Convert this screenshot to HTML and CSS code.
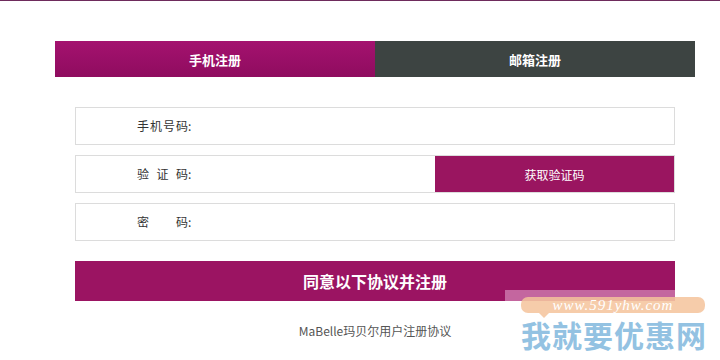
FILE: index.html
```html
<!DOCTYPE html>
<html lang="zh-CN">
<head>
    <meta charset="UTF-8">
    <meta name="viewport" content="width=device-width, initial-scale=1.0">
    <title>注册</title>
    <link rel="stylesheet" href="styles.css">
</head>
<body>
    <div class="top-line"></div>

    <div class="register">
        <div class="tabs">
            <div class="tab active">手机注册</div>
            <div class="tab">邮箱注册</div>
        </div>

        <form class="reg-form">
            <div class="field">
                <label class="label"><span class="label-text">手机号码</span>:</label>
                <input type="text" class="input">
            </div>
            <div class="field">
                <label class="label"><span class="label-text">验证码</span>:</label>
                <input type="text" class="input">
                <button type="button" class="code-btn">获取验证码</button>
            </div>
            <div class="field">
                <label class="label"><span class="label-text">密码</span>:</label>
                <input type="password" class="input">
            </div>

            <button type="button" class="submit-btn">同意以下协议并注册</button>
            <a class="agreement" href="#">MaBelle玛贝尔用户注册协议</a>
        </form>
    </div>

    <!-- 水印 -->
    <div class="watermark">
        <div class="wm-shade"></div>
        <div class="wm-bubble">www.591yhw.com</div>
        <div class="wm-name">我就要优惠网</div>
    </div>
</body>
</html>
```

FILE: styles.css
```css
* {
    box-sizing: border-box;
}
body {
    margin: 0;
    font-family: "Noto Sans CJK SC", "Liberation Sans", sans-serif;
    font-size: 12px;
    color: #333;
    background: #fff;
    width: 720px;
    height: 360px;
    overflow: hidden;
    position: relative;
}
.top-line {
    height: 1px;
    background: #6e2b5c;
}
.register {
    width: 640px;
    margin: 40px 0 0 55px;
}
.tabs {
    display: flex;
    height: 36px;
}
.tab {
    flex: 1;
    display: flex;
    align-items: center;
    justify-content: center;
    font-size: 13px;
    font-weight: bold;
    color: #fff;
    background: #3d4442;
}
.tab.active {
    background: linear-gradient(to bottom, #a4126f, #8f0c5f);
}
.reg-form {
    width: 600px;
    margin: 30px 0 0 20px;
}
.field {
    display: flex;
    align-items: center;
    height: 38px;
    border: 1px solid #dcdcdc;
    margin-bottom: 10px;
    background: #fff;
}
.label {
    display: flex;
    padding-left: 61px;
    width: 122px;
    color: #333;
    line-height: 36px;
}
.label-text {
    display: inline-block;
    width: 51px;
    text-align: justify;
    text-align-last: justify;
}
.input {
    flex: 1;
    height: 100%;
    border: none;
    outline: none;
    font: inherit;
}
.code-btn {
    width: 239px;
    height: 36px;
    border: none;
    background: #9a1560;
    color: #fff;
    font: inherit;
    font-size: 12px;
    cursor: pointer;
}
.submit-btn {
    display: block;
    width: 600px;
    height: 40px;
    margin-top: 20px;
    border: none;
    background: #9b1462;
    color: #fff;
    font-family: inherit;
    font-size: 16px;
    font-weight: bold;
    cursor: pointer;
}
.agreement {
    display: block;
    margin-top: 21px;
    text-align: center;
    color: #555;
    text-decoration: none;
    font-size: 12px;
}
.watermark {
    position: absolute;
    left: 505px;
    top: 290px;
    width: 215px;
    height: 70px;
    pointer-events: none;
}
.wm-shade {
    position: absolute;
    left: 0;
    top: 0;
    width: 170px;
    height: 11px;
    background: rgba(230, 170, 210, 0.55);
}
.wm-bubble {
    position: absolute;
    left: 16px;
    top: 7px;
    width: 184px;
    height: 16px;
    border-radius: 7px;
    background: rgba(245, 195, 155, 0.85);
    color: #fff;
    font-family: "Liberation Serif", serif;
    font-style: italic;
    font-size: 15px;
    line-height: 16px;
    letter-spacing: 1px;
    text-align: center;
}
.wm-bubble::after {
    content: "";
    position: absolute;
    left: 18px;
    top: 16px;
    border: 5px solid transparent;
    border-top-color: rgba(245, 195, 155, 0.85);
}
.wm-name {
    position: absolute;
    left: 16px;
    top: 27px;
    font-size: 30px;
    font-weight: bold;
    line-height: 34px;
    color: #93c2e2;
    letter-spacing: 1px;
}
```
